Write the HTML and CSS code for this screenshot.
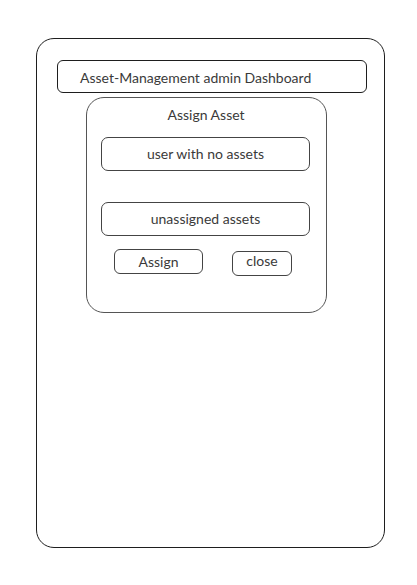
FILE: index.html
```html
<!DOCTYPE html>
<html lang="en">
<head>
    <meta charset="UTF-8">
    <meta name="viewport" content="width=device-width, initial-scale=1.0">
    <title>Assign Asset</title>
    <link rel="stylesheet" href="styles.css">
</head>
<body>
    <div class="frame">
        <div class="header">Asset-Management admin Dashboard</div>

        <div class="modal">
            <div class="title">Assign Asset</div>
            <div class="field">user with no assets</div>
            <div class="field second">unassigned assets</div>
            <div class="actions">
                <button class="btn assign">Assign</button>
                <button class="btn close">close</button>
            </div>
        </div>
    </div>
</body>
</html>
```

FILE: styles.css
```css
body { margin: 0; background: #fff; font-family: Lato, "Noto Sans", sans-serif; color: #3a3a3a; font-size: 14px; }
.frame { box-sizing: border-box; margin: 38px 0 0 36px; width: 349px; height: 510px; border: 1.6px solid #1e1e1e; border-radius: 18px; padding: 21px 0 0 20px; }
.header { box-sizing: border-box; width: 310px; height: 33px; border: 1.5px solid #1e1e1e; border-radius: 6px; padding: 9px 0 0 22px; line-height: 16px; }
.modal { box-sizing: border-box; margin: 4px 0 0 29px; width: 241px; height: 216px; border: 1.3px solid #555; border-radius: 18px; padding: 8px 0 0 14px; }
.title { width: 210px; text-align: center; line-height: 18px; }
.field { box-sizing: border-box; margin-top: 13px; width: 209px; height: 34px; border: 1.3px solid #444; border-radius: 7px; text-align: center; line-height: 31px; }
.field.second { margin-top: 31px; }
.actions { display: flex; align-items: flex-start; margin-top: 13px; padding-left: 13px; }
.btn { box-sizing: border-box; font: inherit; color: inherit; background: #fff; border: 1.3px solid #444; border-radius: 6px; padding: 0; cursor: pointer; }
.assign { width: 89px; height: 25px; line-height: 22px; }
.close { width: 60px; height: 25px; margin: 2px 0 0 29px; line-height: 14px; padding-bottom: 6px; }
```
